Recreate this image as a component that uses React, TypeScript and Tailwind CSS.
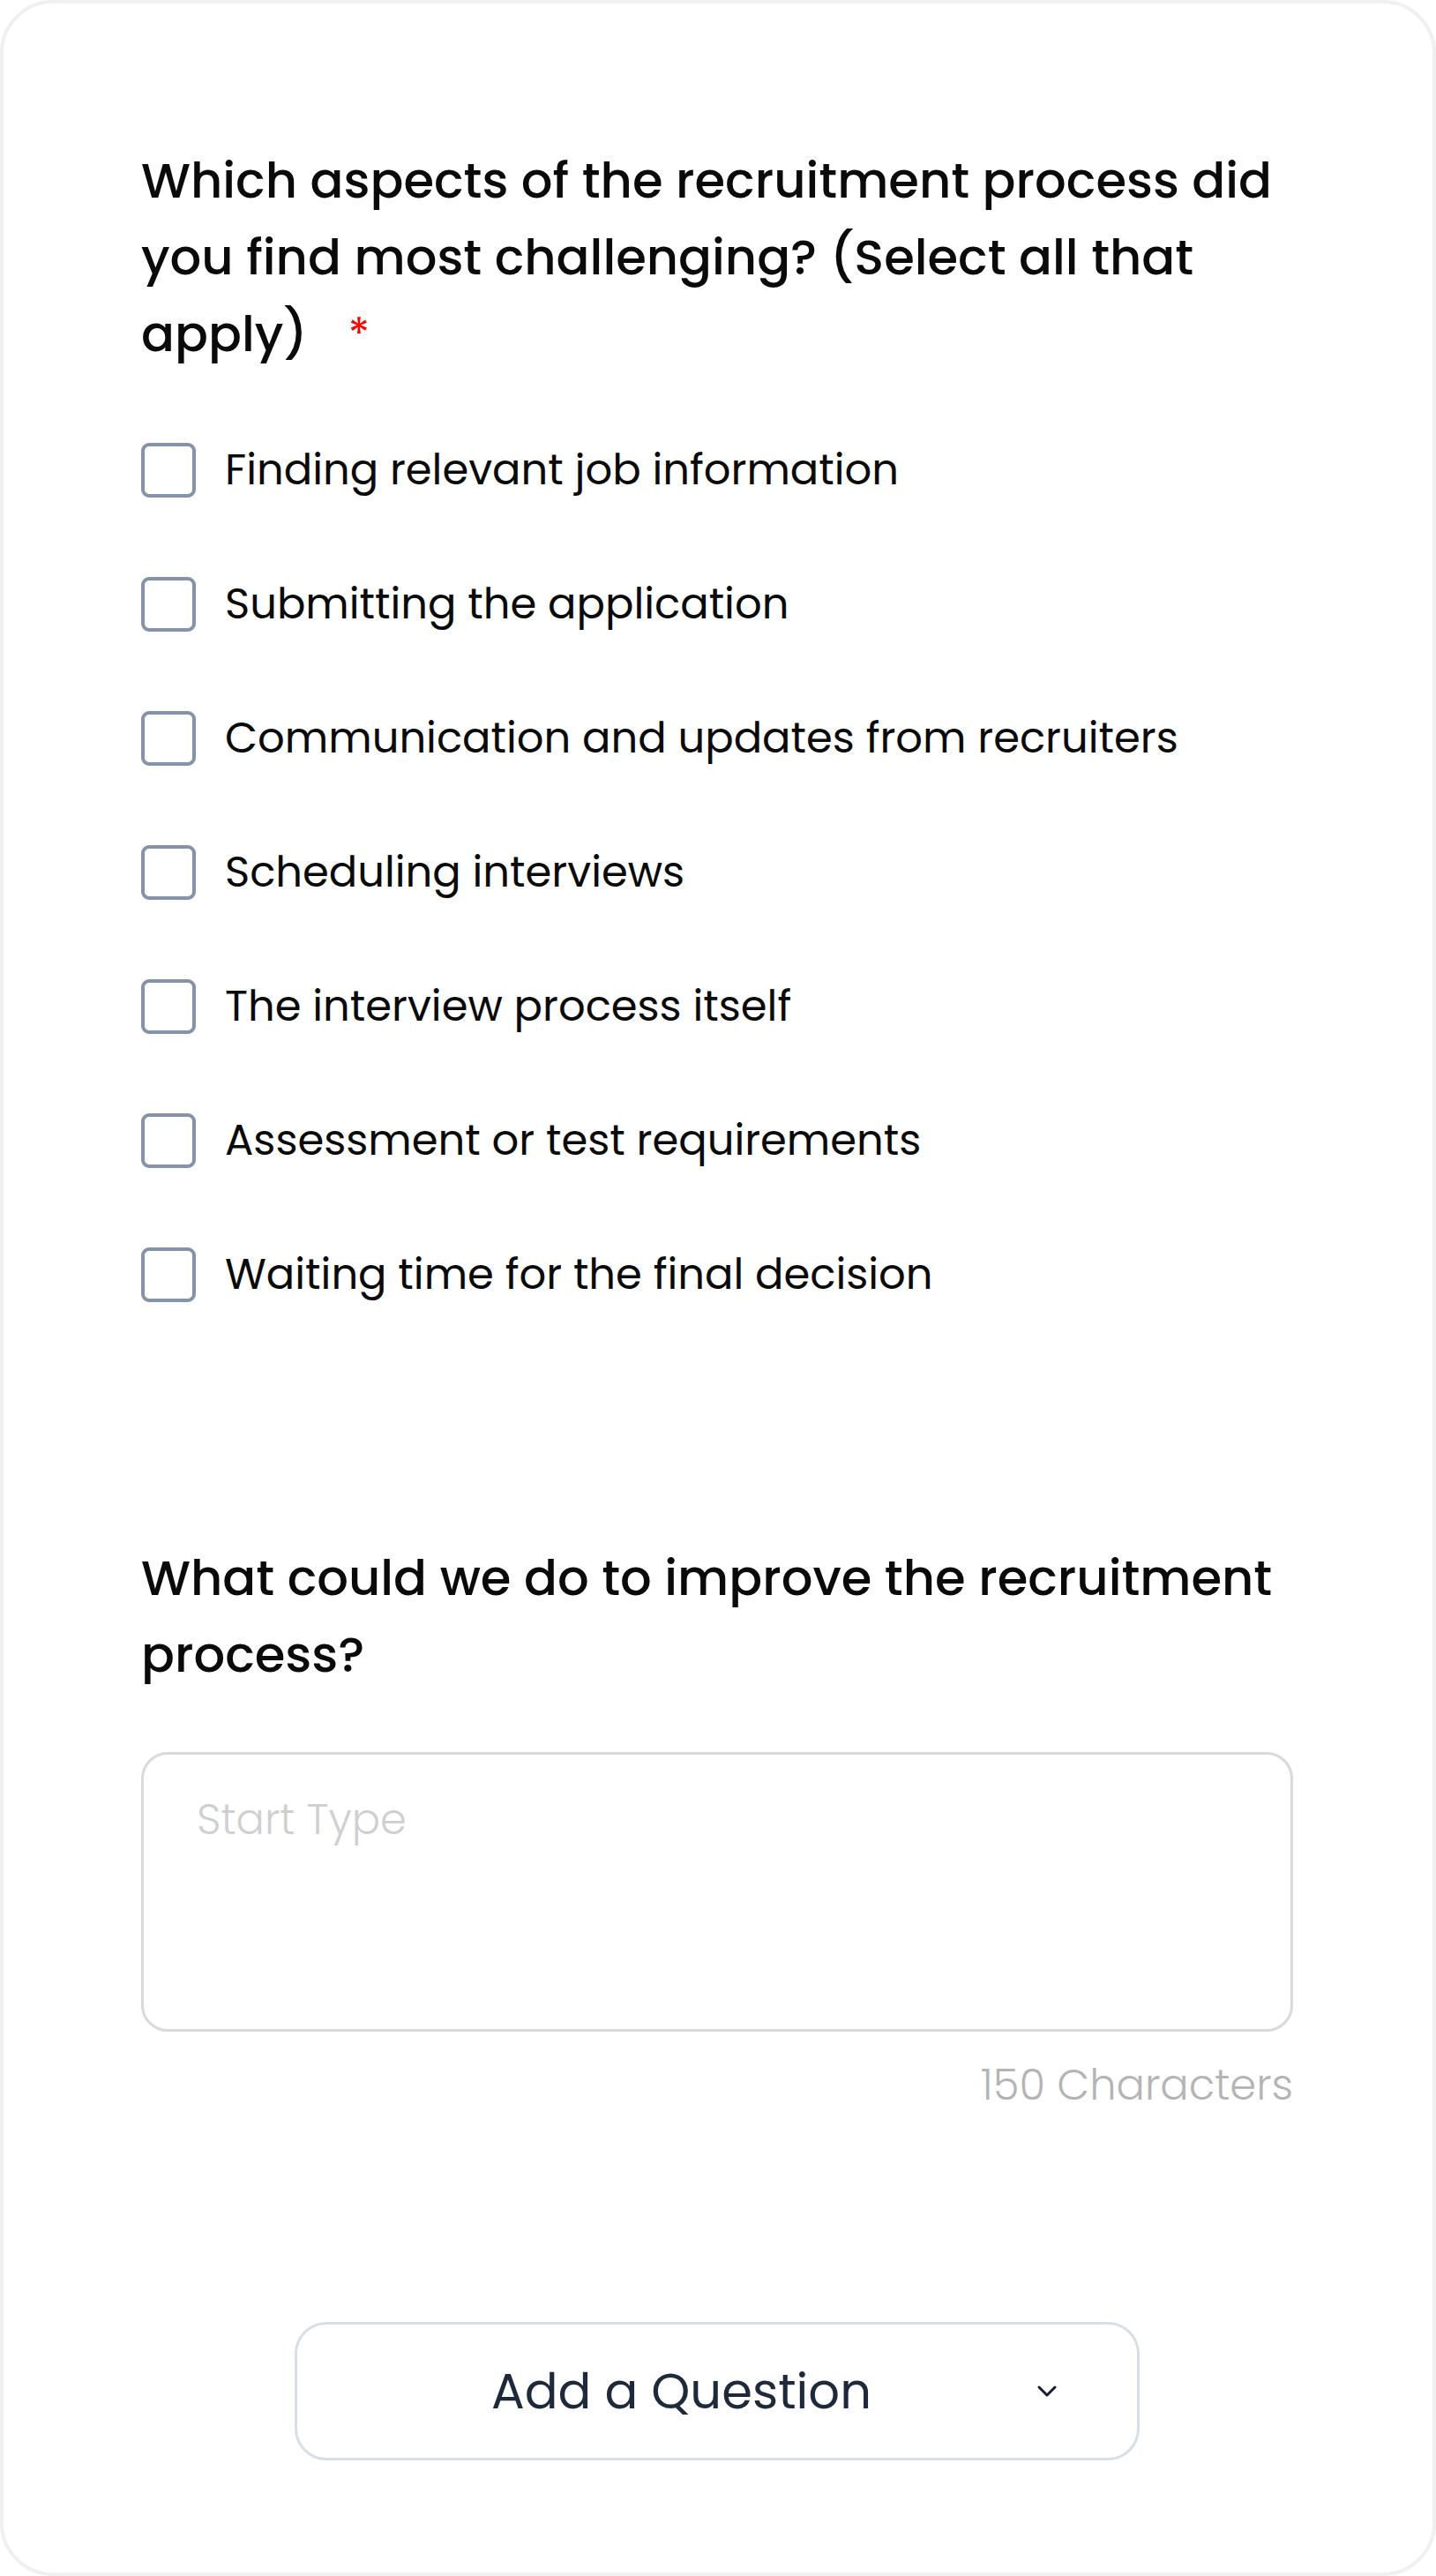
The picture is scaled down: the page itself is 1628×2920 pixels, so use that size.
import React from "react";

const options = [
  "Finding relevant job information",
  "Submitting the application",
  "Communication and updates from recruiters",
  "Scheduling interviews",
  "The interview process itself",
  "Assessment or test requirements",
  "Waiting time for the final decision",
];

const font = { fontFamily: '"Poppins", "Inter", "Noto Sans", sans-serif' };

export default function App() {
  return (
    <div className="w-[1628px] bg-white" style={font}>
      <div className="flex h-[2920px] flex-col rounded-[60px] border-4 border-[#f0f0f0] bg-white pl-[156px] pr-[158px] pt-[157px]">
        <h2 className="text-[56px] font-medium leading-[87px] text-[#0a0a0a]">
          Which aspects of the recruitment process did you find most challenging? (Select all that apply)
          <span className="ml-[46px] align-[2px] text-[50px] font-normal text-[#ff0000]">*</span>
        </h2>

        <div className="mt-[80px] flex flex-col gap-[90px]">
          {options.map((o) => (
            <label key={o} className="flex h-[62px] items-center gap-[33px]">
              <span className="h-[62px] w-[62px] shrink-0 rounded-[9px] border-4 border-[#8593aa] bg-white" />
              <span className="text-[48px] font-normal leading-[62px] text-[#0a0a0a]">{o}</span>
            </label>
          ))}
        </div>

        <h2 className="mt-[269px] text-[56px] font-medium leading-[87px] text-[#0a0a0a]">
          What could we do to improve the recruitment process?
        </h2>

        <div className="mt-[67px] h-[317px] w-full rounded-[30px] border-[3px] border-[#d9d9d9] px-[60px] pt-[44px]">
          <span className="text-[48px] font-light leading-[60px] text-[#cfcfcf]">Start Type</span>
        </div>
        <div className="mt-[31px] text-right text-[48px] font-light leading-[60px] text-[#b4b4b4]">
          150 Characters
        </div>

        <div className="mt-[238px] flex justify-center">
          <button className="flex h-[157px] w-[958px] items-center rounded-[36px] border-[3px] border-[#d8dee9] bg-white pl-[93px] pr-[90px]">
            <span className="flex-1 text-center text-[56px] font-normal text-[#1e293b]">Add a Question</span>
            <svg width="24" height="16" viewBox="0 0 24 16" className="ml-[60px]">
              <path d="M3 3 L12 12 L21 3" fill="none" stroke="#1a1a3e" strokeWidth="3" strokeLinecap="round" strokeLinejoin="round" />
            </svg>
          </button>
        </div>
      </div>
    </div>
  );
}
